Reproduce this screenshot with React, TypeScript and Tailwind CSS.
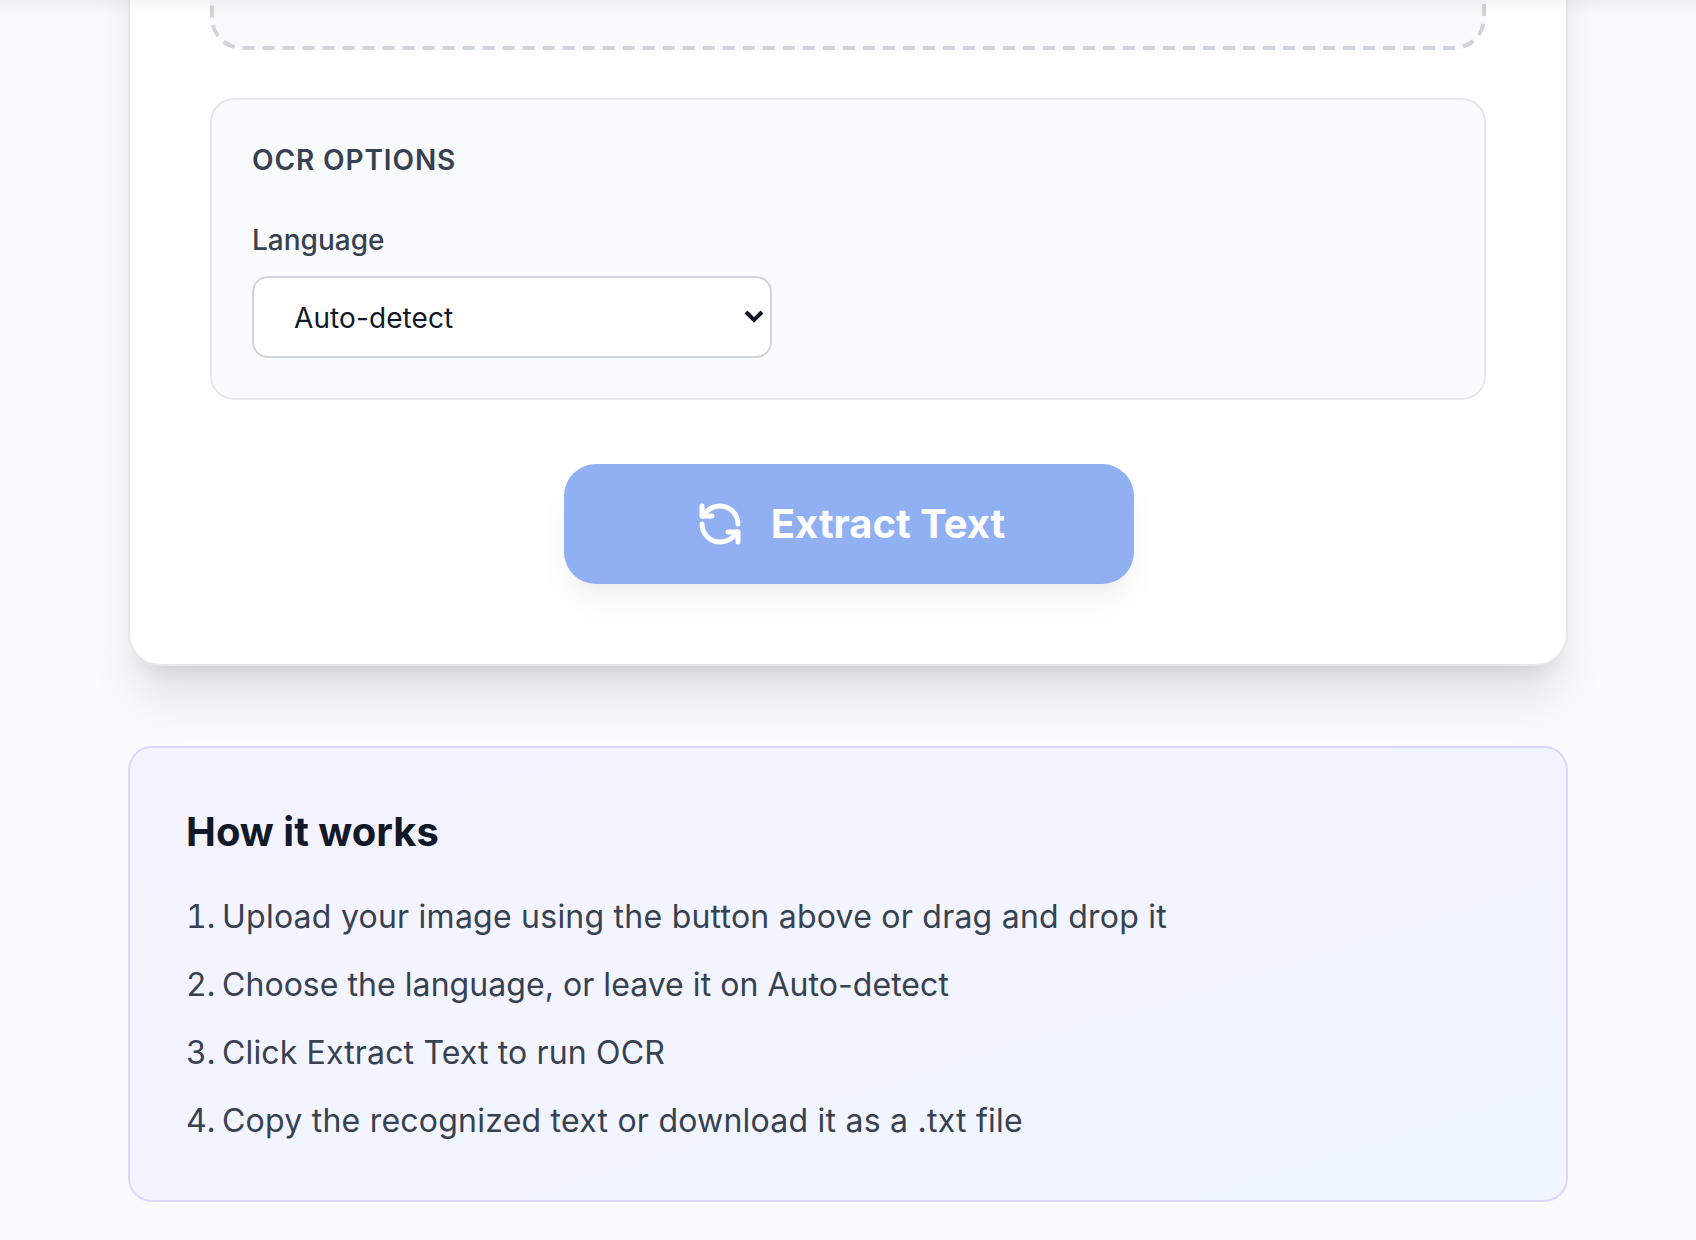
import { RefreshCcw } from "lucide-react";

const steps = [
    { text: "Upload your image using the button above or drag and drop it", tracking: "tracking-[0.12px]" },
    { text: "Choose the language, or leave it on Auto-detect", tracking: "tracking-[0.025px]" },
    { text: "Click Extract Text to run OCR", tracking: "tracking-[0.075px]" },
    { text: "Copy the recognized text or download it as a .txt file", tracking: "tracking-[0.117px]" },
];

const languages = ["Auto-detect", "English", "Spanish", "French", "German"];

function OcrOptions() {
    return (
        <div className="mt-6 rounded-xl border border-[#e5e7eb] bg-[#f9fafb] p-5">
            <h3 className="mb-5 text-sm font-semibold uppercase tracking-[0.45px] text-[#374151]">OCR Options</h3>
            <label htmlFor="language" className="mb-2 block text-sm font-medium text-[#374151]">
                Language
            </label>
            <select
                id="language"
                className="block h-[41px] w-[260px] rounded-lg border border-[#d1d5db] bg-white px-4 text-sm tracking-[0.05px] text-[#111827]"
            >
                {languages.map((l) => (
                    <option key={l}>{l}</option>
                ))}
            </select>
        </div>
    );
}

function HowItWorks() {
    return (
        <section className="mt-10 h-[228px] rounded-xl border border-[#ddd6fe] bg-linear-to-br from-[#f5f3ff] to-[#eff6ff] p-7">
            <h2 className="mb-[15px] text-xl font-bold text-[#111827]">How it works</h2>
            <ol className="space-y-2 leading-[26px] text-[#374151]">
                {steps.map((s, i) => (
                    <li key={s.text} className="flex">
                        <span className="w-[18px] shrink-0 tabular-nums">{i + 1}.</span>
                        <span className={s.tracking}>{s.text}</span>
                    </li>
                ))}
            </ol>
        </section>
    );
}

export default function App() {
    return (
        <div className="h-[1240px] w-[1696px] overflow-hidden">
            {/* laid out at 848x620 and shown at double size */}
            <div className="h-[620px] w-[848px] origin-top-left scale-200 overflow-hidden bg-[#f9fafb] font-['Inter',sans-serif]">
                <header className="relative z-10 -mx-5 -mt-16 h-16 bg-white shadow-[0_4px_6px_-1px_rgba(0,0,0,0.05)]" />
                <main className="mx-auto w-[720px]">
                    <section className="-mt-64 rounded-2xl border border-[#e5e7eb] bg-white px-10 pb-10 pt-0 shadow-xl">
                        <div className="h-[280px] rounded-2xl border-2 border-dashed border-[#d1d5db] bg-[#f9fafb]" />
                        <OcrOptions />
                        <button
                            disabled
                            className="mx-auto mt-8 flex h-15 w-[285px] items-center justify-center gap-[13px] rounded-2xl bg-[#2563eb] pl-[3px] text-xl font-bold text-white opacity-50 shadow-lg"
                        >
                            <RefreshCcw className="size-6" strokeWidth={2.5} />
                            Extract Text
                        </button>
                    </section>
                    <HowItWorks />
                </main>
            </div>
        </div>
    );
}
